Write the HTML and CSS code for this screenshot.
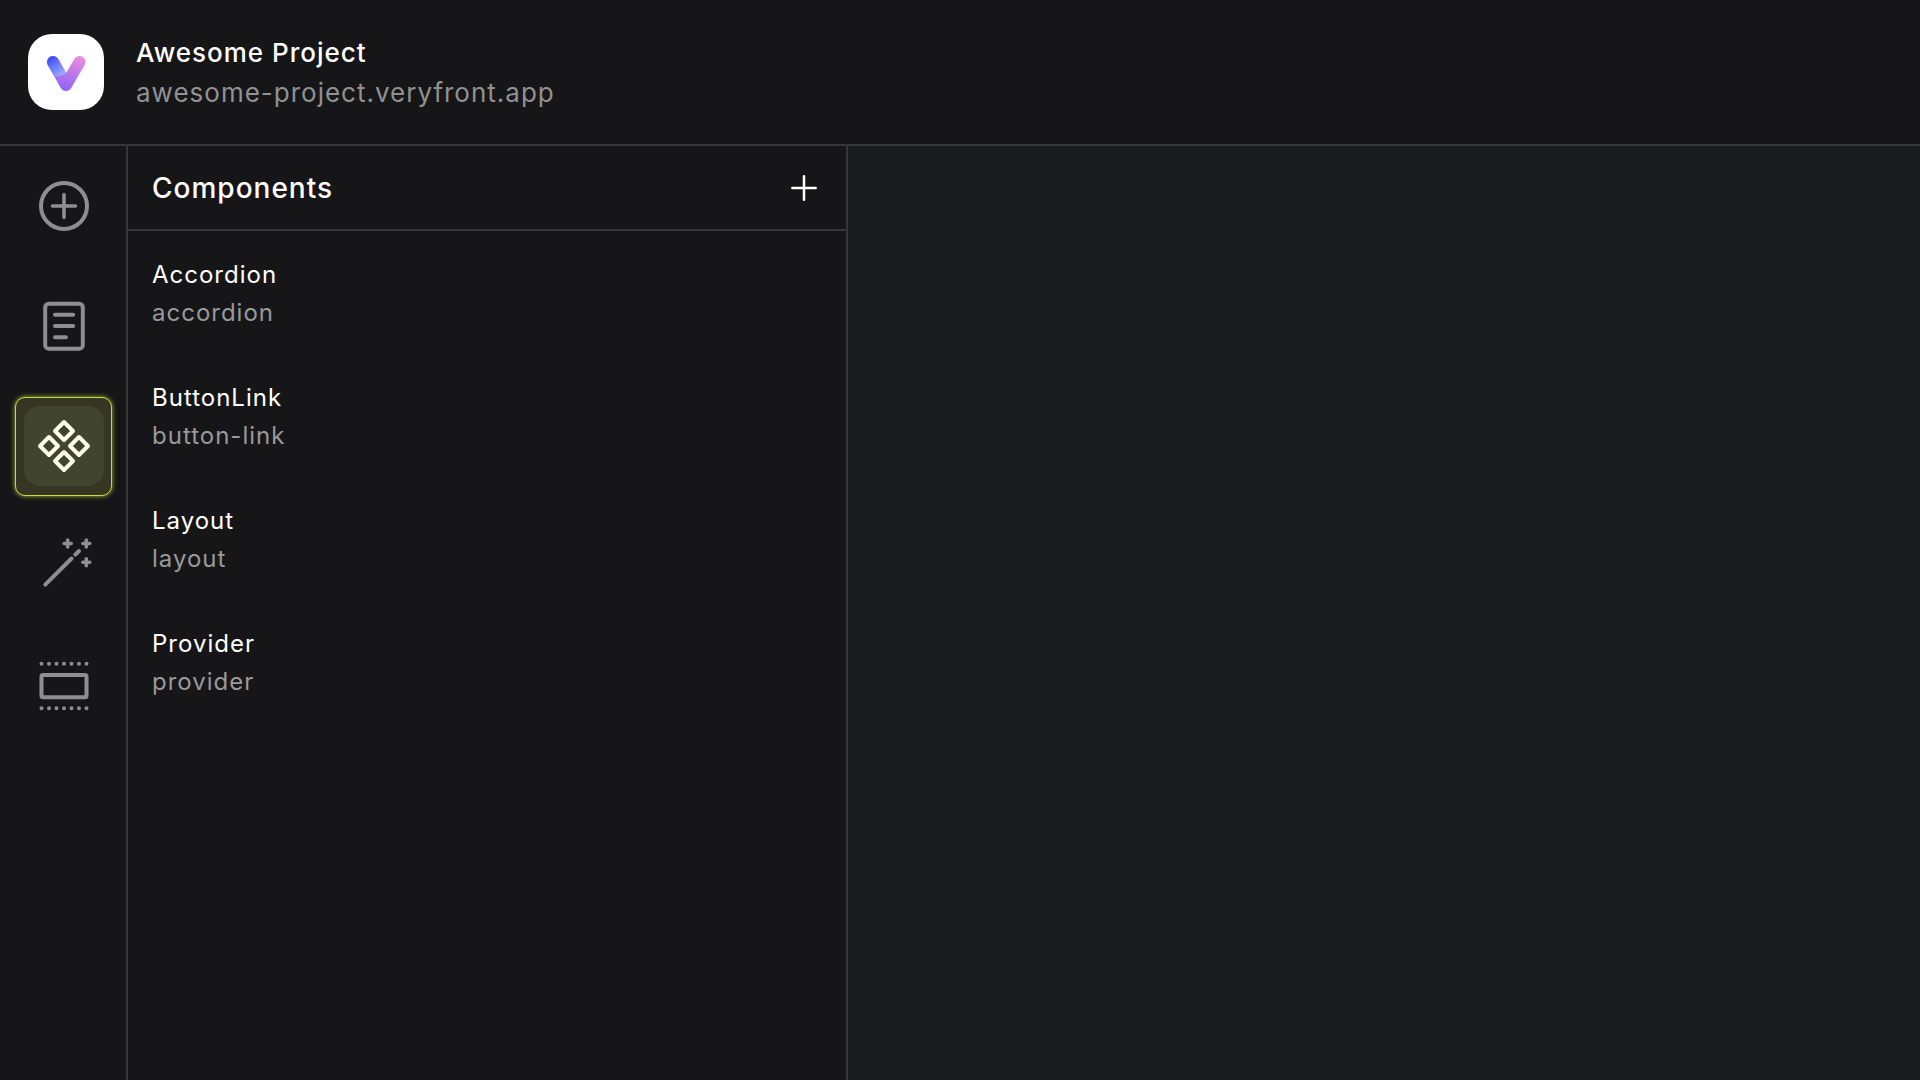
FILE: index.html
```html
<!DOCTYPE html>
<html lang="en">
<head>
<meta charset="utf-8">
<title>Awesome Project</title>
<link rel="stylesheet" href="styles.css">
</head>
<body>
<header class="topbar">
  <a class="logo" href="#" aria-label="Home">
    <svg viewBox="0 0 76 76" aria-hidden="true">
      <defs>
        <linearGradient id="arm" gradientUnits="userSpaceOnUse" x1="48" y1="20" x2="36" y2="56">
          <stop offset="0" stop-color="#ee8fdc"/><stop offset="1" stop-color="#8f63f8"/>
        </linearGradient>
        <linearGradient id="tip" gradientUnits="userSpaceOnUse" x1="22" y1="24" x2="36" y2="42">
          <stop offset="0" stop-color="#3d50ff"/><stop offset="1" stop-color="#a9b2ff"/>
        </linearGradient>
      </defs>
      <path class="logo-arm" d="M25 28 38 51 51.500 28"/>
      <path class="logo-tip" d="M19.800 31a6 6 0 0 1 10.400-6L38 38.500C35 42 29 43 26 41.500Z"/>
    </svg>
  </a>
  <div class="project">
    <h1 class="project-name">Awesome Project</h1>
    <a class="project-domain" href="#">awesome-project.veryfront.app</a>
  </div>
</header>
<div class="workspace">
  <nav class="rail" aria-label="Tools">
    <button class="tool" type="button" aria-label="Add">
      <svg viewBox="0 0 80 80"><circle cx="40" cy="40" r="23"/><path class="thin" d="M40 28.500v23M28.500 40h23"/></svg>
    </button>
    <button class="tool" type="button" aria-label="Pages">
      <svg viewBox="0 0 80 80"><rect x="21.200" y="17.700" width="37.600" height="45" rx="3.500"/><path d="M31 28.700h18.200M31 40h18.200M31 51.200h11"/></svg>
    </button>
    <button class="tool tool-active" type="button" aria-label="Components" aria-pressed="true">
      <svg viewBox="0 0 80 80"><path d="M40 16 49 25 40 34 31 25ZM25 31 34 40 25 49 16 40ZM55 31 64 40 55 49 46 40ZM40 46 49 55 40 64 31 55Z"/></svg>
    </button>
    <button class="tool" type="button" aria-label="Magic">
      <svg viewBox="0 0 80 80"><path d="M21.300 58.700 47.500 32.500M51.300 28.700 55 25"/><path class="thin" d="M43.700 14v7M40.200 17.500h7M62.300 14v7M58.800 17.500h7M62.300 32.700v7M58.800 36.200h7"/></svg>
    </button>
    <button class="tool" type="button" aria-label="Sections">
      <svg viewBox="0 0 80 80"><rect x="17.500" y="29" width="45" height="22.300" rx="1.500"/><path class="dots" d="M17.500 17.700H62.600M17.500 62.300H62.600"/></svg>
    </button>
  </nav>
  <aside class="panel">
    <div class="panel-head">
      <h2 class="panel-title">Components</h2>
      <button class="add" type="button" aria-label="Add component">
        <svg viewBox="0 0 40 40"><path d="M20 8.300v23.400M8.300 20h23.400"/></svg>
      </button>
    </div>
    <ul class="list">
      <li><a class="item" href="#"><span class="item-name">Accordion</span><span class="item-slug">accordion</span></a></li>
      <li><a class="item" href="#"><span class="item-name">ButtonLink</span><span class="item-slug">button-link</span></a></li>
      <li><a class="item" href="#"><span class="item-name">Layout</span><span class="item-slug">layout</span></a></li>
      <li><a class="item" href="#"><span class="item-name">Provider</span><span class="item-slug">provider</span></a></li>
    </ul>
  </aside>
  <main class="canvas"></main>
</div>
</body>
</html>
```
FILE: styles.css
```css
:root {
  --bg: #161618;
  --line: #363638;
  --muted: #919192;
}
* { box-sizing: border-box; }
body {
  margin: 0;
  min-height: 100vh;
  display: flex;
  flex-direction: column;
  background: var(--bg);
  color: #fff;
  font-family: Inter, "Liberation Sans", sans-serif;
  font-size: 24px;
  line-height: 38px;
  letter-spacing: 1px;
}
a { color: inherit; text-decoration: none; }
button { padding: 0; border: 0; background: none; color: inherit; font: inherit; cursor: pointer; }
svg { display: block; width: 100%; height: 100%; fill: none; stroke: currentColor; stroke-linecap: round; stroke-linejoin: round; }
h1, h2, ul { margin: 0; padding: 0; font-weight: 500; }

.topbar {
  display: flex;
  align-items: flex-end;
  gap: 32px;
  padding: 33px 28px 31px;
  border-bottom: 2px solid var(--line);
}
.logo { width: 76px; height: 76px; margin-bottom: 3px; border-radius: 24px; background: #fff; }
.logo-arm { stroke: url(#arm); stroke-width: 12; }
.logo-tip { fill: url(#tip); stroke: none; }
.project { display: flex; flex-direction: column; font-size: 26px; line-height: 40px; }
.project-name { font-size: 26px; }
.project-domain { color: var(--muted); }

.workspace { flex: 1; display: flex; }
.rail {
  display: flex;
  flex-direction: column;
  gap: 40px;
  padding: 20px 22px 20px 24px;
  border-right: 2px solid var(--line);
}
.tool { position: relative; width: 80px; height: 80px; border-radius: 16px; color: #8e8e90; }
.tool svg { position: relative; stroke-width: 4; }
.tool .thin { stroke-width: 3.600; }
.tool .dots { stroke-width: 4; stroke-dasharray: 0 7.500; }
.tool-active { color: #fdffe6; }
.tool-active::before {
  content: "";
  position: absolute;
  inset: -9px -8px -10px -9px;
  border: 1px solid #c4dc4c;
  border-radius: 10px;
  background: #353722;
  box-shadow: 0 0 5px #a4b93c;
}
.tool-active::after {
  content: "";
  position: absolute;
  inset: 0;
  border-radius: 16px;
  background: #41452f;
}
.tool-active svg { z-index: 1; }

.panel { width: 720px; border-right: 2px solid var(--line); }
.panel-head {
  display: flex;
  align-items: center;
  justify-content: space-between;
  padding: 22px 22px 21px 24px;
  border-bottom: 2px solid var(--line);
}
.panel-title { font-size: 28px; line-height: 40px; }
.add { width: 40px; height: 40px; }
.add svg { stroke-width: 2.500; }
.list { list-style: none; padding-top: 3px; font-weight: 400; }
.item { display: flex; flex-direction: column; padding: 22px 24px 25px; }
.item-slug { color: #99999b; }
.canvas { flex: 1; background: #1a1b1d; }
```
